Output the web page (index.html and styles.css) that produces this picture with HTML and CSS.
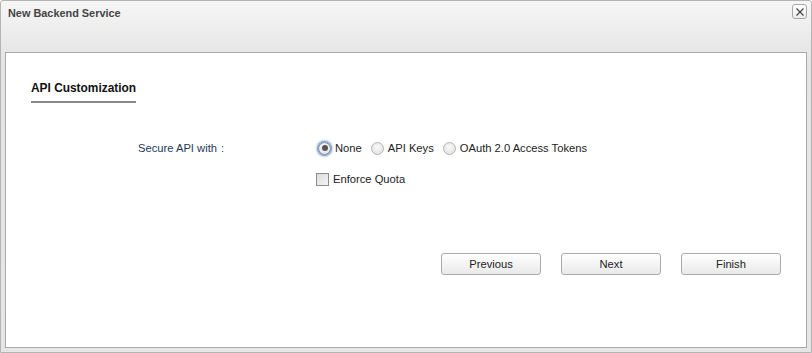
FILE: index.html
```html
<!DOCTYPE html>
<html>
<head>
<meta charset="utf-8">
<link rel="stylesheet" href="styles.css">
</head>
<body>
<div class="dialog">
  <div class="titlebar">
    <span class="title">New Backend Service</span>
    <button class="close" aria-label="close">
      <svg width="10" height="10" viewBox="0 0 10 10"><path d="M1.5 1.5 L8.5 8.5 M8.5 1.5 L1.5 8.5" stroke="#444" stroke-width="1.2" fill="none"/></svg>
    </button>
  </div>
  <div class="panel">
    <div class="heading">API Customization</div>
    <div class="form-row">
      <div class="label">Secure API with <span class="colon">:</span></div>
      <div class="options">
        <label class="opt"><span class="radio checked"></span>None</label>
        <label class="opt"><span class="radio"></span>API Keys</label>
        <label class="opt"><span class="radio"></span>OAuth 2.0 Access Tokens</label>
      </div>
    </div>
    <div class="check-row">
      <label class="opt"><span class="checkbox"></span>Enforce Quota</label>
    </div>
    <div class="buttons">
      <button class="btn">Previous</button>
      <button class="btn">Next</button>
      <button class="btn">Finish</button>
    </div>
  </div>
</div>
</body>
</html>
```
FILE: styles.css
```css
* { box-sizing: border-box; }
html, body { margin: 0; padding: 0; background: #fff; }
body { font-family: "Liberation Sans", Arial, sans-serif; font-size: 11.2px; color: #222; }

.dialog {
  width: 812px;
  height: 353px;
  border: 1px solid #b4b4b4;
  border-radius: 3px 3px 0 0;
  background: linear-gradient(#f6f6f6, #e4e4e4 60px, #e6e6e6);
  padding: 0 4px 4px 4px;
  display: flex;
  flex-direction: column;
}

.titlebar {
  height: 51px;
  display: flex;
  align-items: flex-start;
  justify-content: space-between;
  flex: none;
}
.title {
  font-weight: bold;
  font-size: 10.9px;
  color: #444;
  margin-top: 5px;
  margin-left: 3px;
  line-height: 14px;
}
.close {
  width: 15px;
  height: 15px;
  margin-top: 3px;
  margin-right: 0px;
  padding: 0;
  border: 1px solid #a8a8a8;
  border-radius: 3px;
  background: linear-gradient(#ffffff, #ececec);
  display: flex;
  align-items: center;
  justify-content: center;
}

.panel {
  flex: 1;
  background: #fff;
  border: 1px solid #a9a9a9;
  padding: 28px 25px 0 25px;
  display: flex;
  flex-direction: column;
}

.heading {
  align-self: flex-start;
  font-weight: bold;
  font-size: 11.9px;
  line-height: 15px;
  color: #111;
  padding-bottom: 5px;
  border-bottom: 2px solid #888;
}

.form-row {
  display: flex;
  align-items: center;
  height: 20px;
  margin-top: 35px;
}
.label {
  margin-left: 107px;
  width: 180px;
  color: #1d3a5a;
}
.colon { color: #4a3a80; margin-left: 1px; }
.options { display: flex; align-items: center; gap: 9px; }
.opt { display: flex; align-items: center; gap: 4px; color: #222; }

.radio {
  width: 13px;
  height: 13px;
  border-radius: 50%;
  border: 1px solid #b5b5b5;
  background: radial-gradient(circle at 50% 40%, #fafafa, #dcdcdc);
  display: inline-block;
  position: relative;
}
.radio.checked {
  border-color: #8a8a8a;
  box-shadow: 0 0 0 1px #7ea6e0, 0 0 2px 2px #b8cff0;
}
.radio.checked::after {
  content: "";
  position: absolute;
  left: 2.5px; top: 2.5px;
  width: 6px; height: 6px;
  border-radius: 50%;
  background: #555;
}

.check-row {
  display: flex;
  height: 20px;
  align-items: center;
  margin-top: 11px;
  margin-left: 285px;
}
.checkbox {
  width: 13px;
  height: 13px;
  border: 1px solid #8c8c8c;
  background: linear-gradient(135deg, #dcdcdc, #f4f4f4);
  display: inline-block;
}

.buttons {
  display: flex;
  justify-content: flex-end;
  gap: 20px;
  margin-top: 64px;
}
.btn {
  width: 100px;
  height: 22px;
  border: 1px solid #aaa;
  border-radius: 3px;
  background: linear-gradient(#ffffff, #e9e9e9);
  font-family: "Liberation Sans", Arial, sans-serif;
  font-size: 11.2px;
  color: #222;
  padding: 0;
}
```
